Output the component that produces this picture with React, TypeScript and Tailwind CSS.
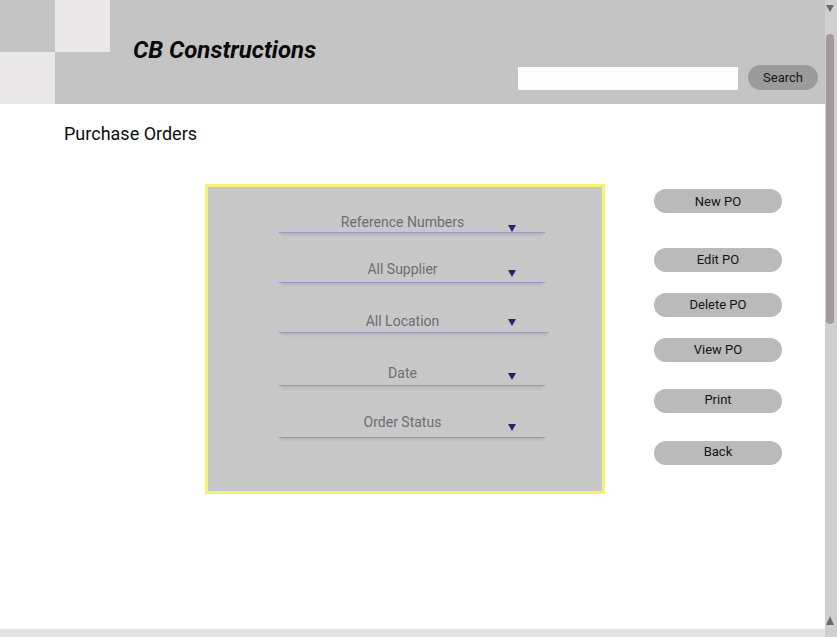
import { ReactNode } from "react";

const font = { fontFamily: "Roboto, 'Noto Sans', sans-serif" };

type FieldProps = {
  label: string;
  box: string;
  arrowTop: string;
  textPad: string;
};

const Field = ({ label, box, arrowTop, textPad }: FieldProps) => (
  <div
    className={`relative ml-[71px] border-b border-[#9b96c6] shadow-[0_4px_3px_-2px_rgba(0,0,0,0.1)] ${box}`}
  >
    <div className={`text-center text-[14px] leading-[18px] text-[#6e6e6e] ${textPad}`}>{label}</div>
    <svg
      className={`absolute left-[229px] ${arrowTop}`}
      width="8"
      height="7"
      viewBox="0 0 8 7"
    >
      <polygon points="0,0 8,0 4,7" fill="#2a2268" />
    </svg>
  </div>
);

const PillButton = ({ children, cls }: { children: ReactNode; cls: string }) => (
  <button
    className={`block h-[24px] w-[128px] rounded-full bg-[#bababa] text-[13px] text-[#141414] ${cls}`}
  >
    {children}
  </button>
);

export default function App() {
  return (
    <div className="flex h-[637px] w-[837px] overflow-hidden bg-white" style={font}>
      <div className="flex w-[825px] flex-col">
        {/* header */}
        <header className="flex h-[104px] bg-[#c4c4c4]">
          <div className="grid w-[110px] shrink-0 grid-cols-2 grid-rows-2">
            <div className="bg-[#c4c4c4]" />
            <div className="bg-[#e9e7e8]" />
            <div className="bg-[#e9e7e8]" />
            <div className="bg-[#c4c4c4]" />
          </div>
          <div className="flex flex-1 flex-col">
            <h1 className="ml-[23px] mt-[36px] text-[24px] font-bold italic leading-[28px] text-[#0a0a0a]">
              CB Constructions
            </h1>
            <div className="mt-[1px] flex items-end justify-end gap-[10px] pr-[7px]">
              <input className="h-[23px] w-[220px] bg-[#fffdfb] outline-none" />
              <button className="h-[25px] w-[70px] rounded-full bg-[#9b9b9b] pt-[1px] text-[13px] text-[#151515]">
                Search
              </button>
            </div>
          </div>
        </header>

        {/* body */}
        <main className="flex-1">
          <h2 className="ml-[64px] mt-[19px] text-[18px] leading-[21px] text-[#0d0d0d]">
            Purchase Orders
          </h2>
          <div className="mt-[40px] flex">
            <section className="ml-[205px] h-[310px] w-[400px] border-[3px] border-[#f6f171] bg-[#c8c8c8]">
              <Field
                label="Reference Numbers"
                box="mt-[26px] h-[20px] w-[266px]"
                arrowTop="top-[12px]"
                textPad="pr-[19px]"
              />
              <Field
                label="All Supplier"
                box="mt-[27px] h-[23px] w-[266px]"
                arrowTop="top-[10px]"
                textPad="pr-[19px]"
              />
              <Field
                label="All Location"
                box="mt-[29px] h-[21px] w-[270px]"
                arrowTop="top-[7px]"
                textPad="pr-[23px]"
              />
              <Field
                label="Date"
                box="mt-[31px] h-[22px] w-[266px]"
                arrowTop="top-[9px]"
                textPad="pr-[19px]"
              />
              <Field
                label="Order Status"
                box="mt-[27px] h-[25px] w-[266px]"
                arrowTop="top-[11px]"
                textPad="pr-[19px]"
              />
            </section>
            <div className="ml-[49px] flex flex-col">
              <PillButton cls="mt-[5px] pt-[1px]">New PO</PillButton>
              <PillButton cls="mt-[35px]">Edit PO</PillButton>
              <PillButton cls="mt-[21px]">Delete PO</PillButton>
              <PillButton cls="mt-[21px]">View PO</PillButton>
              <PillButton cls="mt-[27px] pb-[2px]">Print</PillButton>
              <PillButton cls="mt-[28px] pb-[2px]">Back</PillButton>
            </div>
          </div>
        </main>
        <div className="h-[8px] bg-[#e4e4e4]" />
      </div>

      {/* scrollbar */}
      <div className="flex w-[12px] flex-col items-start bg-[#d2cfd0] pl-[1px]">
        <svg className="mt-[5px]" width="8" height="7" viewBox="0 0 8 7">
          <polygon points="0,0 8,0 4,7" fill="#6c6c6c" />
        </svg>
        <div className="mt-[22px] h-[290px] w-[8px] rounded-full bg-[#a59a9a]" />
        <div className="flex-1" />
        <svg className="mb-[12px]" width="8" height="9" viewBox="0 0 8 9">
          <polygon points="4,0 8,9 0,9" fill="#6c6c6c" />
        </svg>
      </div>
    </div>
  );
}
